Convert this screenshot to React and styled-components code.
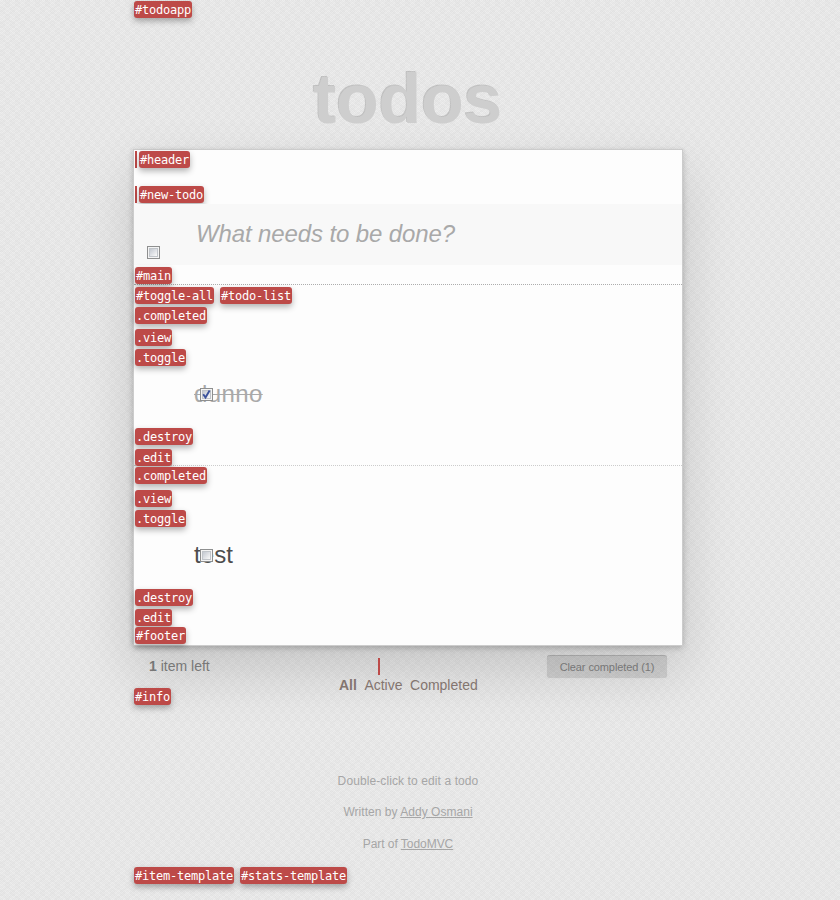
import React from 'react';
import styled, { createGlobalStyle } from 'styled-components';

const GlobalStyle = createGlobalStyle`
  * { box-sizing: border-box; }
  body {
    margin: 0;
    min-height: 900px;
    background-color: #ededed;
    background-image:
      conic-gradient(rgba(0, 0, 0, 0.024) 25%, transparent 0 50%, rgba(0, 0, 0, 0.024) 0 75%, transparent 0),
      conic-gradient(rgba(0, 0, 0, 0.016) 25%, transparent 0 50%, rgba(0, 0, 0, 0.016) 0 75%, transparent 0),
      conic-gradient(rgba(0, 0, 0, 0.012) 25%, transparent 0 50%, rgba(0, 0, 0, 0.012) 0 75%, transparent 0);
    background-size: 2px 2px, 6px 4px, 10px 14px;
    font: 14px/20px "Liberation Sans", Arial, sans-serif;
    color: #4d4d4d;
  }
`;

const Page = styled.div`
  width: 550px;
  height: 900px;
  margin-left: 133px;
  padding-top: 1px;
  display: flex;
  flex-direction: column;
  overflow: visible;
`;

const TagRow = styled.div`
  display: flex;
  flex: none;
  gap: ${(p) => p.$gap ?? 6}px;
  height: 17px;
  margin-top: ${(p) => p.$top ?? 0}px;
  margin-left: 1px;
`;

const Tag = styled.code`
  position: relative;
  height: 17px;
  padding: 0 1px;
  border-radius: 3px;
  background: #bd4a48;
  color: #fff;
  box-shadow: 0 3px 6px rgba(0, 0, 0, 0.3);
  font: 12px/19px "DejaVu Sans Mono", monospace;
  letter-spacing: -0.224px;
  white-space: pre;
`;

const Marker = styled.span`
  width: 2px;
  height: 17px;
  background: #bd4a48;
`;

const Title = styled.h1`
  flex: none;
  height: 80px;
  margin: 41px 0 10px;
  padding-right: 1px;
  text-align: center;
  font-size: 70px;
  line-height: 80px;
  font-weight: bold;
  letter-spacing: -0.3px;
  color: #cecece;
  text-shadow: -1px -1px 0 rgba(0, 0, 0, 0.16);
`;

const Panel = styled.section`
  flex: none;
  height: 497px;
  border: 1px solid #ccc;
  background: #fdfdfd;
  box-shadow: 0 2px 6px rgba(0, 0, 0, 0.2), 0 25px 50px rgba(0, 0, 0, 0.15);
`;

const Header = styled.header`
  height: 54px;
  padding-top: 1px;
`;

const Entry = styled.div`
  position: relative;
  height: 61px;
  padding: 15px 0 0 62px;
  background: #f8f8f8;
  font-size: 24px;
  line-height: 30px;
  font-style: italic;
  letter-spacing: -0.12px;
  color: #a9a9a9;
`;

const Main = styled.div`
  height: 20px;
  padding-top: 2px;
  border-bottom: 1px dotted #adadad;
`;

const Item = styled.div`
  display: flow-root;
  height: ${(p) => p.$height}px;
  border-bottom: ${(p) => (p.$last ? '0' : '1px dotted #ccc')};
`;

const ItemText = styled.div`
  position: relative;
  height: 71px;
  padding: 13px 0 0 60px;
  font-size: 24px;
  line-height: 30px;
  letter-spacing: ${(p) => (p.$done ? '0.4px' : '0.1px')};
  color: ${(p) => (p.$done ? '#a9a9a9' : '#4d4d4d')};
  text-decoration: ${(p) => (p.$done ? 'line-through' : 'none')};
  text-decoration-thickness: 1px;
`;

const Box = styled.svg`
  position: absolute;
  left: ${(p) => p.$x}px;
  top: ${(p) => p.$y}px;
  width: 13px;
  height: 13px;
`;

function Checkbox({ x, y, checked }) {
  return (
    <Box $x={x} $y={y} viewBox="0 0 13 13">
      <defs>
        <linearGradient id="well" x1="0" y1="0" x2="1" y2="1">
          <stop offset="0.1" stopColor="#c5cad2" />
          <stop offset="0.9" stopColor="#f8f8f8" />
        </linearGradient>
      </defs>
      <rect x="0.5" y="0.5" width="12" height="12" fill="#f4f4f4" stroke="#8e8f8f" />
      <rect x="2.5" y="2.5" width="8" height="8" fill="url(#well)" stroke="#c1c5ca" />
      {checked && <path d="M3.2 6.2 5.5 9.4 9.6 2.5" fill="none" stroke="#3b529c" strokeWidth="1.9" />}
    </Box>
  );
}

const StatusBar = styled.footer`
  display: grid;
  flex: none;
  grid-template-columns: 190px 160px 168px;
  height: 42px;
  padding: 8px 16px 0;
  color: #777;
`;

const Count = styled.span`
  padding-top: 2px;
`;

const Filters = styled.nav`
  display: flex;
  flex-wrap: wrap;
  gap: 2px 7.5px;
  width: 160px;
  margin: 4px 0 0;
  color: #83756f;
  white-space: nowrap;
`;

const FilterMarker = styled.div`
  display: flex;
  width: 100%;
  padding-left: 39px;
`;

const Filter = styled.span`
  line-height: 16px;
  font-weight: ${(p) => (p.$active ? 'bold' : 'normal')};
`;

const ClearButton = styled.button`
  justify-self: end;
  width: 120px;
  height: 23px;
  margin-top: 1px;
  padding: 0;
  border: 0;
  border-radius: 3px;
  background: rgba(0, 0, 0, 0.1);
  box-shadow: inset 0 1px 0 rgba(0, 0, 0, 0.12), 0 0 1px rgba(0, 0, 0, 0.08);
  color: #777;
  font: 11px/20px "Liberation Sans", Arial, sans-serif;
  letter-spacing: -0.1px;
`;

const Info = styled.div`
  flex: none;
  height: 96px;
  margin-top: 66px;
  text-align: center;
  color: #a6a6a6;
  font-size: 12px;
  line-height: 21px;
`;

const Note = styled.p`
  margin: 0 0 ${(p) => p.$gap ?? 10}px;
  letter-spacing: ${(p) => p.$spacing ?? 0}px;
`;

const Link = styled.a`
  color: inherit;
  text-decoration: underline;
`;

export default function App() {
  return (
    <>
      <GlobalStyle />
      <Page>
        <TagRow><Tag>#todoapp</Tag></TagRow>
        <Title>todos</Title>
        <Panel>
          <Header>
            <TagRow $gap={2}><Marker /><Tag>#header</Tag></TagRow>
            <TagRow $gap={2} $top={18}><Marker /><Tag>#new-todo</Tag></TagRow>
          </Header>
          <Entry>
            What needs to be done?
            <Checkbox x={13} y={42} />
          </Entry>
          <Main><TagRow><Tag>#main</Tag></TagRow></Main>
          <Item $height={181}>
            <TagRow $top={2}><Tag>#toggle-all</Tag><Tag>#todo-list</Tag></TagRow>
            <TagRow $top={3}><Tag>.completed</Tag></TagRow>
            <TagRow $top={5}><Tag>.view</Tag></TagRow>
            <TagRow $top={3}><Tag>.toggle</Tag></TagRow>
            <ItemText $done>dunno<Checkbox x={66} y={22} checked /></ItemText>
            <TagRow $top={-9}><Tag>.destroy</Tag></TagRow>
            <TagRow $top={4}><Tag>.edit</Tag></TagRow>
          </Item>
          <Item $height={179} $last>
            <TagRow $top={1}><Tag>.completed</Tag></TagRow>
            <TagRow $top={6}><Tag>.view</Tag></TagRow>
            <TagRow $top={3}><Tag>.toggle</Tag></TagRow>
            <ItemText>test<Checkbox x={66} y={22} /></ItemText>
            <TagRow $top={-9}><Tag>.destroy</Tag></TagRow>
            <TagRow $top={3}><Tag>.edit</Tag></TagRow>
            <TagRow $top={1}><Tag>#footer</Tag></TagRow>
          </Item>
        </Panel>
        <StatusBar>
          <Count><b>1</b> item left</Count>
          <Filters>
            <FilterMarker><Marker /></FilterMarker>
            <Filter $active>All</Filter>
            <Filter>Active</Filter>
            <Filter>Completed</Filter>
          </Filters>
          <ClearButton>Clear completed (1)</ClearButton>
        </StatusBar>
        <TagRow><Tag>#info</Tag></TagRow>
        <Info>
          <Note $spacing={0.1}>Double-click to edit a todo</Note>
          <Note $gap={11} $spacing={0.03}>Written by <Link>Addy Osmani</Link></Note>
          <Note $spacing={-0.05}>Part of <Link>TodoMVC</Link></Note>
        </Info>
        <TagRow><Tag>#item-template</Tag><Tag>#stats-template</Tag></TagRow>
      </Page>
    </>
  );
}
